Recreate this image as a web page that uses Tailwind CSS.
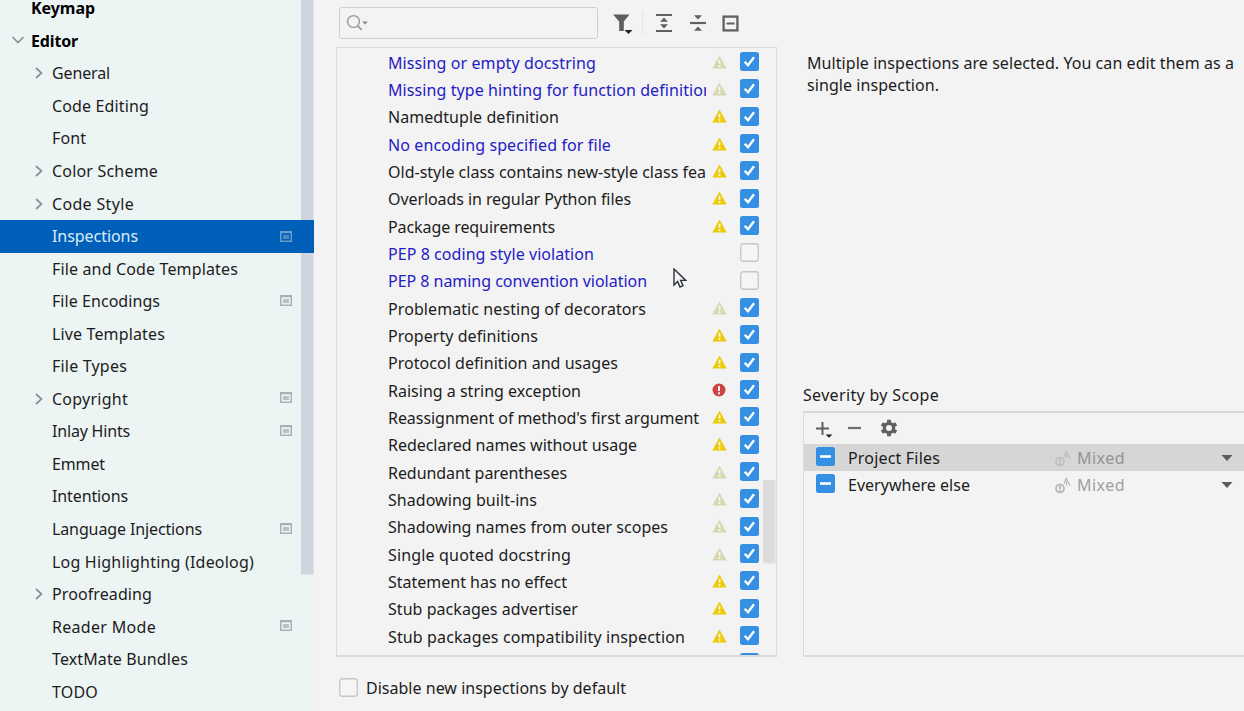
<!DOCTYPE html>
<html lang="en">
<head>
<meta charset="utf-8">
<title>Settings</title>
<script src="https://cdn.jsdelivr.net/npm/@tailwindcss/browser@4"></script>
</head>
<body class="h-[711px] w-[1244px] overflow-hidden bg-[#f3f3f3] font-['Noto_Sans',sans-serif] text-[16px] leading-[22px] text-[#1c1c1c]">
<svg class="hidden">
  <symbol id="right" viewBox="0 0 10 14"><path d="M2 2l5.500 5L2 12" fill="none" stroke="#8b8f93" stroke-width="1.700"/></symbol>
  <symbol id="down" viewBox="0 0 14 10"><path d="M1.500 2L7 7.500L12.500 2" fill="none" stroke="#8b8f93" stroke-width="1.700"/></symbol>
  <symbol id="proj" viewBox="0 0 12 11"><rect x=".75" y=".75" width="10.500" height="9.500" fill="none" stroke="currentColor" stroke-width="1.500"/><path d="M0 1.500h12M3 5h6M3 7h6" stroke="currentColor" stroke-width="1.600"/></symbol>
  <symbol id="warn" viewBox="0 0 15 14"><path d="M7.500 .5L14.700 13.500H.3z" fill="currentColor"/><path d="M7.500 4.700v4M7.500 10v2" stroke="#fbf8e4" stroke-width="1.800"/></symbol>
  <symbol id="err" viewBox="0 0 14 14"><circle cx="7" cy="7" r="6.500" fill="#cc4343"/><path d="M7 3v5M7 9.200v2" stroke="#fbeeee" stroke-width="2"/></symbol>
  <symbol id="check" viewBox="0 0 19 19"><rect width="19" height="19" rx="2.500" fill="#3590e4"/><path d="M4.700 9.700l3.300 3.500l6-8" fill="none" stroke="#fff" stroke-width="2.400"/></symbol>
  <symbol id="empty" viewBox="0 0 19 19"><rect x=".75" y=".75" width="17.500" height="17.500" rx="2.500" fill="#f5f5f5" stroke="#c6c6ca" stroke-width="1.300"/></symbol>
  <symbol id="mixed" viewBox="0 0 19 19"><rect width="19" height="19" rx="2.500" fill="#3590e4"/><path d="M4 9.500h11" stroke="#fff" stroke-width="2.600"/></symbol>
  <symbol id="sev" viewBox="0 0 16 17"><circle cx="5" cy="11.500" r="4" fill="none" stroke="currentColor" stroke-width="1.700"/><path d="M5 8.500v3.800M5 13v1.500" stroke="currentColor" stroke-width="1.900"/><path d="M9.200 6.500l2-5L15 8.500M11.500 4.500v4" fill="none" stroke="currentColor" stroke-width="1.200"/></symbol>
</svg>
<div class="flex h-full">
  <aside class="relative h-full w-[314px] shrink-0 overflow-hidden bg-[#edf4f4]">
    <div class="absolute top-0 left-[301px] h-[575px] w-[13px] border-r border-b border-[#dfe2e9] bg-[#d0d4de]"></div>
    <nav id="tree" class="relative -mt-[7.500px] flex flex-col"></nav>
  </aside>
  <main class="ml-[22px] flex w-[441px] shrink-0 flex-col">
    <div class="mt-[7px] flex h-8 items-center">
      <div class="ml-[3px] flex h-8 w-[259px] items-center rounded-[3px] border border-[#cfcfcf] pl-1.5">
        <svg class="h-5 w-6" viewBox="0 0 24 20" fill="none"><circle cx="7.500" cy="8.500" r="5.900" stroke="#9b9b9b" stroke-width="1.400"/><path d="M11.700 12.800l4 4" stroke="#9b9b9b" stroke-width="1.800"/><path d="M16 8.500h6l-3 3z" fill="#8b8b8b"/></svg>
      </div>
      <svg class="ml-3.5 h-6 w-6" viewBox="0 0 24 24"><path d="M1 3.500h16.500l-5.700 7v9.500H7.200v-9.500z" fill="#5b5d5f"/><path d="M12.500 19h8l-4 4z" fill="#222"/></svg>
      <div class="ml-[6px] h-6 w-px bg-[#e4e4e4]"></div>
      <svg class="ml-[12px] h-5 w-[18px]" viewBox="0 0 18 20"><path d="M1 2h16M1 18h16" stroke="#5e6062" stroke-width="2.200"/><path d="M9 4.500l4 4.200H5zM9 15.500l4-4.200H5z" fill="#5e6062"/></svg>
      <svg class="ml-4 h-5 w-[18px]" viewBox="0 0 18 20"><path d="M1 10h16" stroke="#5e6062" stroke-width="2.200"/><path d="M9 6.500l4-4.200H5zM9 13.500l4 4.200H5z" fill="#5e6062"/></svg>
      <svg class="ml-[15px] h-[17px] w-[17px]" viewBox="0 0 17 17"><rect x="1.600" y="1.600" width="13.800" height="13.800" fill="none" stroke="#5e6062" stroke-width="2.300"/><path d="M4.500 8.500h8" stroke="#5e6062" stroke-width="2"/></svg>
    </div>
    <section class="relative mt-[8px] h-[610px] w-[441px] overflow-hidden border border-b-2 border-[#dadada]">
      <div id="list" class="flex flex-col"></div>
      <div class="absolute top-[432px] right-0 h-[84px] w-[13px] border-r-2 border-b-2 border-[#e6e6e6] bg-[#dcdcdc]"></div>
    </section>
    <label class="mt-5 ml-[3px] flex items-center gap-2"><svg class="-mt-0.5 h-[19px] w-[19px]"><use href="#empty"/></svg><span data-w="260">Disable new inspections by default</span></label>
  </main>
  <section class="ml-[26px] flex w-[441px] shrink-0 flex-col">
    <p class="mt-[52px] ml-1 h-[332px] whitespace-nowrap"><span data-w="427">Multiple inspections are selected. You can edit them as a</span><br><span data-w="132">single inspection.</span></p>
    <h2><span data-w="136">Severity by Scope</span></h2>
    <div class="mt-[5px] h-[246px] border-t-2 border-b-2 border-l border-[#dadada]">
      <div class="flex h-[31px] items-center pl-[11px]">
        <svg class="h-5 w-5" viewBox="0 0 20 20"><path d="M7.500 3v13M1 9.500h13" stroke="#5e6062" stroke-width="2"/><path d="M10.500 15.500h7l-3.500 3.300z" fill="#222"/></svg>
        <svg class="-mt-0.5 ml-3 h-5 w-[15px]" viewBox="0 0 15 20"><path d="M1 10h13" stroke="#6a6c6e" stroke-width="2.200"/></svg>
        <svg class="-mt-0.5 ml-[18px] h-[18px] w-[18px]" viewBox="0 0 18 18"><circle cx="9" cy="9" r="4.600" fill="none" stroke="#5e6062" stroke-width="3.200"/><path d="M9 .7v3.500M9 13.800v3.500M1.800 4.850l3 1.750M13.200 11.400l3 1.750M1.800 13.150l3-1.750M13.200 6.600l3-1.750" stroke="#5e6062" stroke-width="3.800"/></svg>
      </div>
      <div class="flex h-[27px] items-center bg-[#d6d6d6] pl-3"><svg class="-mt-0.5 h-[19px] w-[19px]"><use href="#mixed"/></svg><div class="mt-px ml-[13px] w-[207px]"><span data-w="92">Project Files</span></div><svg class="mt-px h-[17px] w-4 text-[#bdbdbd]"><use href="#sev"/></svg><div class="mt-px ml-[6px] w-[144px] text-[#949494]"><span data-w="48">Mixed</span></div><svg class="h-2 w-3" viewBox="0 0 12 8"><path d="M.5 1h11l-5.500 6z" fill="#5c5c5c"/></svg></div>
      <div class="flex h-[27px] items-center pl-3"><svg class="-mt-0.5 h-[19px] w-[19px]"><use href="#mixed"/></svg><div class="mt-px ml-[13px] w-[207px]"><span data-w="122">Everywhere else</span></div><svg class="mt-px h-[17px] w-4 text-[#b4b4b4]"><use href="#sev"/></svg><div class="mt-px ml-[6px] w-[144px] text-[#a0a0a0]"><span data-w="48">Mixed</span></div><svg class="h-2 w-3" viewBox="0 0 12 8"><path d="M.5 1h11l-5.500 6z" fill="#5c5c5c"/></svg></div>
    </div>
  </section>
</div>
<svg class="absolute top-[268px] left-[673px] h-[21px] w-[15px]" viewBox="0 0 15 21"><path d="M1 1v16l3.700-3.500l2.300 5.500l3-1.300l-2.300-5.300h5z" fill="#f5f5f5" stroke="#2c333b" stroke-width="1.400"/></svg>
<script>
// label, text width, arrow, has project-level icon
const tree = [
  ['Keymap', 64, ''], ['Editor', 47, 'down'], ['General', 58, 'right'], ['Code Editing', 97, ''], ['Font', 34, ''],
  ['Color Scheme', 106, 'right'], ['Code Style', 82, 'right'], ['Inspections', 86, '', 1], ['File and Code Templates', 186, ''],
  ['File Encodings', 108, '', 1], ['Live Templates', 113, ''], ['File Types', 75, ''], ['Copyright', 76, 'right', 1],
  ['Inlay Hints', 78, '', 1], ['Emmet', 53, ''], ['Intentions', 76, ''], ['Language Injections', 150, '', 1],
  ['Log Highlighting (Ideolog)', 202, ''], ['Proofreading', 100, 'right'], ['Reader Mode', 104, '', 1],
  ['TextMate Bundles', 136, ''], ['TODO', 46, '']
];
document.getElementById('tree').innerHTML = tree.map(([t, w, a, p], i) => {
  const row = i === 7 ? 'flex h-[32.560px] shrink-0 items-center bg-[#005fb8] text-[#dcebf8]' : 'flex h-[32.560px] shrink-0 items-center';
  const gut = i < 2 ? 'flex w-[31px] shrink-0 pl-[11px]' : 'flex w-[52px] shrink-0 pl-[34px]';
  const arrow = a === 'down' ? '<svg class="h-[10px] w-[14px] -mt-0.5"><use href="#down"/></svg>' : a ? '<svg class="h-[14px] w-[10px] -mt-px"><use href="#right"/></svg>' : '';
  const icon = p ? `<svg class="${i === 7 ? '-mt-px mr-[22px] ml-auto h-[11px] w-3 text-[#6a9cc9]' : '-mt-[3px] mr-[22px] ml-auto h-[11px] w-3 text-[#a9b0b6]'}"><use href="#proj"/></svg>` : '';
  return `<div class="${row}"><div class="${gut}">${arrow}</div><span data-w="${w}" class="${i < 2 ? '-mt-px font-bold text-black' : '-mt-px'}">${t}</span>${icon}</div>`;
}).join('');

// label, text width, severity (y warning, w weak warning, e error), link colour, unchecked
const list = [
  ['Missing or empty docstring', 208, 'w', 1], ['Missing type hinting for function definition', 325, 'w', 1], ['Namedtuple definition', 171, 'y'],
  ['No encoding specified for file', 223, 'y', 1], ['Old-style class contains new-style class fea', 318, 'y'],
  ['Overloads in regular Python files', 243, 'y'], ['Package requirements', 167, 'y'], ['PEP 8 coding style violation', 206, '', 1, 1],
  ['PEP 8 naming convention violation', 259, '', 1, 1], ['Problematic nesting of decorators', 258, 'w'], ['Property definitions', 150, 'y'],
  ['Protocol definition and usages', 230, 'y'], ['Raising a string exception', 193, 'e'], ["Reassignment of method's first argument", 311, 'y'],
  ['Redeclared names without usage', 249, 'y'], ['Redundant parentheses', 179, 'w'], ['Shadowing built-ins', 149, 'w'],
  ['Shadowing names from outer scopes', 280, 'w'], ['Single quoted docstring', 183, 'w'], ['Statement has no effect', 179, 'y'],
  ['Stub packages advertiser', 190, 'y'], ['Stub packages compatibility inspection', 297, 'y'], ['', 0, '']
];
const sev = {
  y: '<svg class="h-[14px] w-[15px] text-[#ecca08]"><use href="#warn"/></svg>',
  w: '<svg class="h-[14px] w-[15px] text-[#d8d7b4]"><use href="#warn"/></svg>',
  e: '<svg class="h-[14px] w-[14px]"><use href="#err"/></svg>', '': ''
};
document.getElementById('list').innerHTML = list.map(([t, w, s, b, u]) =>
  `<div class="flex h-[27.340px] shrink-0 items-center pl-[51px]"><div class="${b ? 'w-[318px] shrink-0 overflow-hidden pt-[2px] whitespace-nowrap text-[#2420c4]' : 'w-[318px] shrink-0 overflow-hidden pt-[2px] whitespace-nowrap'}"><span data-w="${w}">${t}</span></div><div class="ml-[6px] w-7 shrink-0">${sev[s]}</div><svg class="h-[19px] w-[19px]"><use href="${u ? '#empty' : '#check'}"/></svg></div>`
).join('');

function fit() {
  document.querySelectorAll('[data-w]').forEach(e => {
    e.style.letterSpacing = '0px';
    const n = e.textContent.length;
    if (n) e.style.letterSpacing = (e.dataset.w - e.getBoundingClientRect().width) / n + 'px';
  });
}
fit();
window.addEventListener('load', () => { fit(); requestAnimationFrame(() => requestAnimationFrame(fit)); });
</script>
</body>
</html>
